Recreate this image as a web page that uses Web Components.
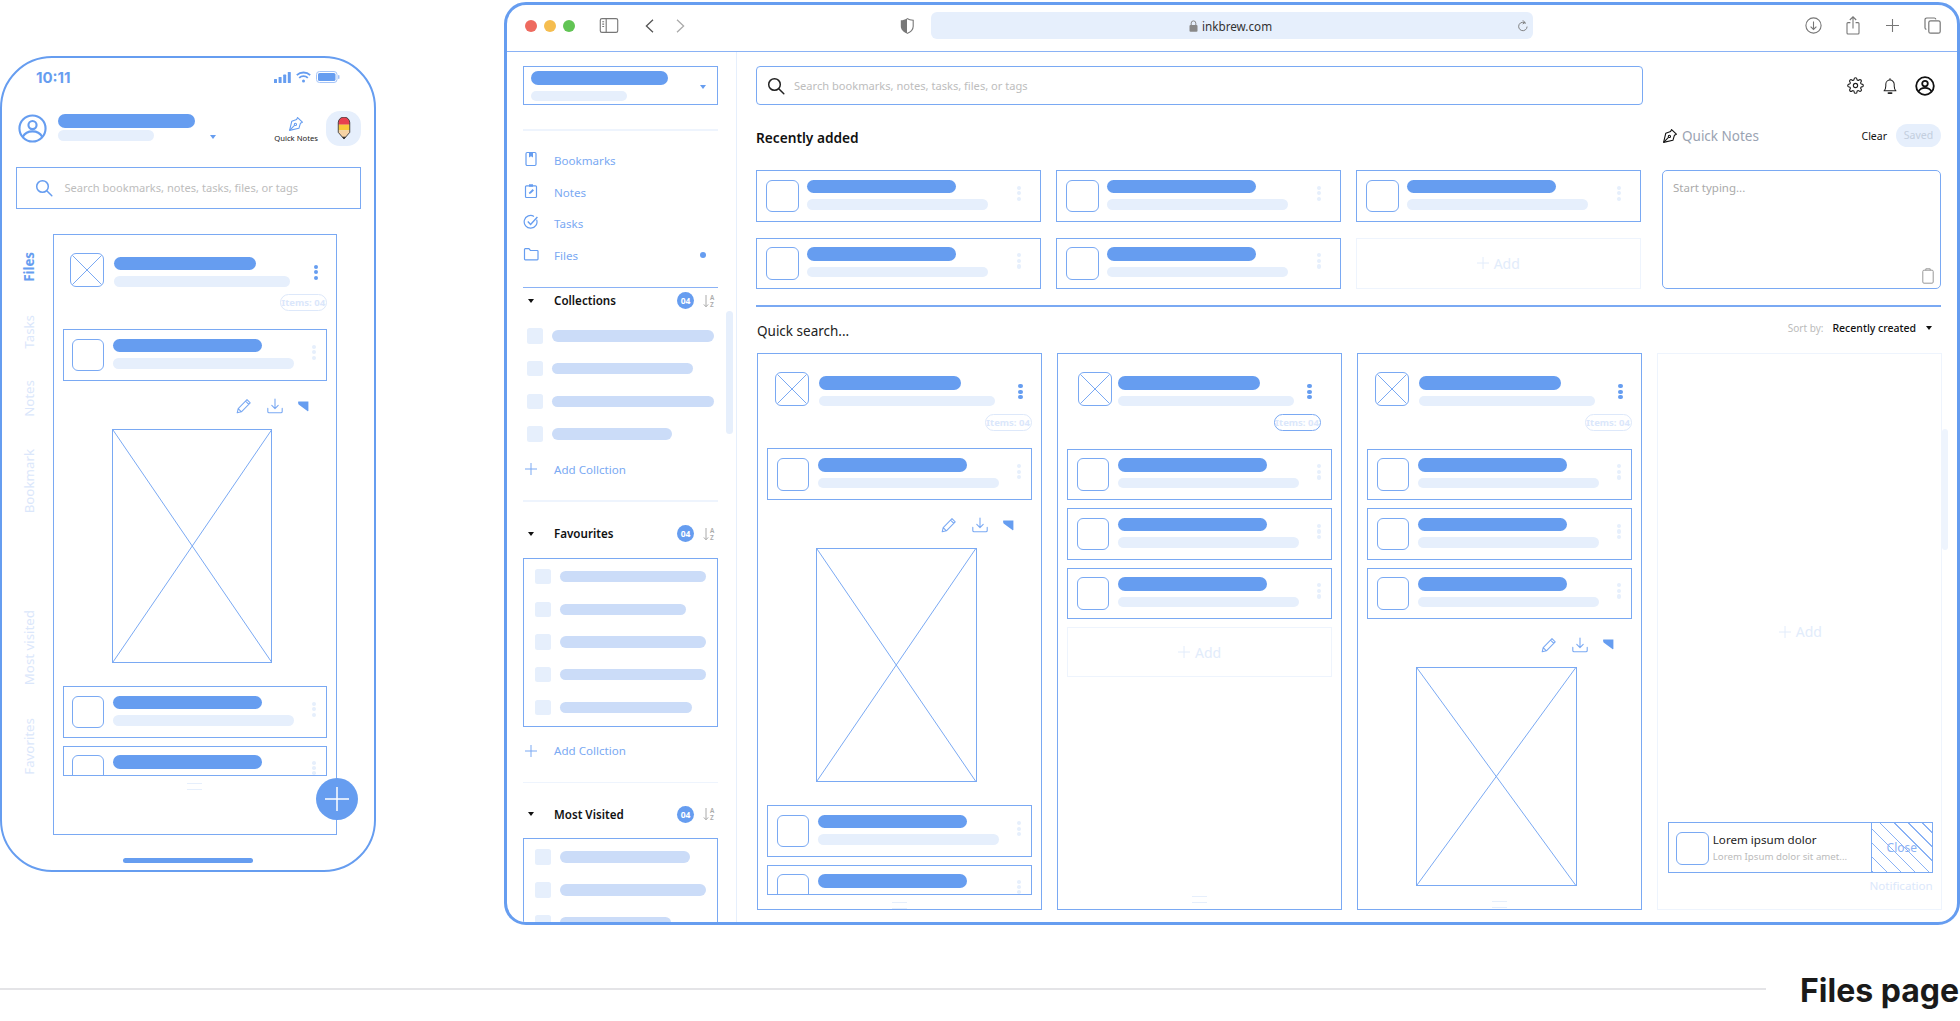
<!DOCTYPE html>
<html>
<head>
<meta charset="utf-8">
<title>Files page</title>
<style>
html,body{margin:0;padding:0;background:#fff}
body{width:1960px;height:1021px;overflow:hidden;font-family:"Noto Sans",sans-serif;--blue:#669df0;--pale:#e6effc;--line:#7aa9f3;--faint:#dbe7fb}
</style>
</head>
<body>
<page-board>
  <phone-frame slot="phone">
    <file-column style="height:601px">
      <file-head></file-head>
      <wire-card class="first"></wire-card>
      <wire-actions></wire-actions>
      <wire-image style="--h:234px"></wire-image>
      <wire-card style="margin-top:23px"></wire-card>
      <wire-card clip></wire-card>
      <wire-grip style="margin-top:7px"></wire-grip>
    </file-column>
  </phone-frame>

  <browser-frame slot="browser">
    <side-bar slot="side">
      <account-box></account-box>
      <side-rule style="margin-top:24px"></side-rule>
      <div style="margin-top:14px">
        <nav-item label="Bookmarks"><svg viewBox="0 0 16 16" fill="none" stroke="#669df0" stroke-width="1.2"><rect x="3" y="1.5" width="10" height="13" rx="1.2"/><path d="M6 1.5h4v5L8 5.2 6 6.5z" fill="#669df0" stroke="none"/></svg></nav-item>
        <nav-item label="Notes"><svg viewBox="0 0 16 16" fill="none" stroke="#669df0" stroke-width="1.2"><rect x="2.5" y="2.8" width="11" height="11.7" rx="1"/><path d="M6 1.2h4v2.6H6z" fill="#669df0" stroke="none"/><path d="M6 11l.4-1.8L9.6 6l1.4 1.4-3.2 3.2z" fill="#669df0" stroke="none"/></svg></nav-item>
        <nav-item label="Tasks"><svg viewBox="0 0 16 16" fill="none" stroke="#669df0" stroke-width="1.2"><path d="M13.6 5.6A6.4 6.4 0 1 1 11 2.4"/><path d="M4.8 7.4L7.6 10.4 14.4 3" stroke-width="1.4"/></svg></nav-item>
        <nav-item label="Files" dot><svg viewBox="0 0 16 16" fill="none" stroke="#669df0" stroke-width="1.2"><path d="M1.5 13V3.5a.8.8 0 0 1 .8-.8h3.6l1.5 1.8h6.8a.8.8 0 0 1 .8.8V13a.8.8 0 0 1-.8.8H2.3a.8.8 0 0 1-.8-.8z"/></svg></nav-item>
      </div>
      <side-head top style="margin-top:16px">Collections</side-head>
      <div style="margin-top:15px;padding-left:4px">
        <side-row style="--w:161.5px"></side-row>
        <side-row style="--w:140.5px"></side-row>
        <side-row style="--w:161.5px"></side-row>
        <side-row style="--w:119.5px"></side-row>
      </div>
      <side-add style="margin-top:19.2px"></side-add>
      <side-rule style="margin-top:23px"></side-rule>
      <side-head style="margin-top:19px">Favourites</side-head>
      <side-box style="margin-top:11px;height:169.5px">
        <side-row style="--w:146px"></side-row>
        <side-row style="--w:126px"></side-row>
        <side-row style="--w:146px"></side-row>
        <side-row style="--w:146px"></side-row>
        <side-row style="--w:132px"></side-row>
      </side-box>
      <side-add style="margin-top:15.5px"></side-add>
      <side-rule style="margin-top:23px"></side-rule>
      <side-head style="margin-top:18px">Most Visited</side-head>
      <side-box style="margin-top:11px;height:120px">
        <side-row style="--w:130px"></side-row>
        <side-row style="--w:146px"></side-row>
        <side-row style="--w:111px"></side-row>
      </side-box>
    </side-bar>

    <main-area slot="main">
      <top-row></top-row>
      <recent-section></recent-section>
      <div class="rule"></div>
      <search-head></search-head>
      <column-grid>
        <file-column>
          <file-head></file-head>
          <wire-card class="first"></wire-card>
          <wire-actions></wire-actions>
          <wire-image style="--h:234px"></wire-image>
          <wire-card style="margin-top:23px"></wire-card>
          <wire-card clip></wire-card>
          <wire-grip style="margin-top:7px"></wire-grip>
        </file-column>
        <file-column>
          <file-head inset></file-head>
          <wire-card class="first"></wire-card>
          <wire-card></wire-card>
          <wire-card></wire-card>
          <add-card style="margin-top:8px;height:50px"></add-card>
          <wire-grip style="margin-top:auto;margin-bottom:6px"></wire-grip>
        </file-column>
        <file-column>
          <file-head></file-head>
          <wire-card class="first"></wire-card>
          <wire-card></wire-card>
          <wire-card></wire-card>
          <wire-actions></wire-actions>
          <wire-image style="--h:219px;margin-top:14px"></wire-image>
          <wire-grip style="margin-top:auto;margin-bottom:1px"></wire-grip>
        </file-column>
        <notice-column></notice-column>
      </column-grid>
    </main-area>
  </browser-frame>

  <page-footer slot="footer">Files page</page-footer>
</page-board>

<script>
// small helper: every element is a template cloned into an open shadow root
function define(name, markup) {
  const tpl = document.createElement("template");
  tpl.innerHTML = markup;
  customElements.define(name, class extends HTMLElement {
    constructor() {
      super();
      this.attachShadow({ mode: "open" }).appendChild(tpl.content.cloneNode(true));
      const label = this.shadowRoot.querySelector("[data-label]");
      if (label) label.textContent = this.getAttribute("label");
    }
  });
}

const searchIcon = c => `<svg viewBox="0 0 18 18" width="18" height="18" fill="none" stroke="${c}" stroke-width="1.5" stroke-linecap="round"><circle cx="7.5" cy="7.5" r="5.8"/><path d="M12 12l4.8 4.8"/></svg>`;
const nibIcon = c => `<svg viewBox="0 0 16 16" width="16" height="16" fill="none" stroke="${c}" stroke-width="1.1" stroke-linejoin="round"><path d="M9.6 1.6l4.8 4.6-2 1.1-1.5 5L1.6 14.4l2.2-9.2 4.8-1.7z"/><path d="M1.8 14.2l4.7-4.8"/><circle cx="7.4" cy="8.4" r="1.1"/></svg>`;

define("wire-thumb", `<style>
:host{display:block;flex:none;box-sizing:border-box;width:var(--s,32.5px);height:var(--s,32.5px);border:1px solid var(--line);border-radius:6px;overflow:hidden}
svg{display:none;width:100%;height:100%}
:host([cross]) svg{display:block}
</style><svg viewBox="0 0 32 32" fill="none" stroke="#7aa9f3" stroke-width="1"><path d="M0 0L32 32M32 0L0 32"/></svg>`);

define("wire-lines", `<style>
:host{display:block;flex:none}
i{display:block;border-radius:7px}
.a{width:var(--a,142px);height:13.5px;background:var(--blue)}
.b{width:var(--b,176px);height:10.5px;background:var(--pale);margin-top:var(--g,6px)}
</style><i class="a"></i><i class="b"></i>`);

define("wire-kebab", `<style>
:host{display:flex;flex-direction:column;gap:1.4px;flex:none}
i{display:block;width:4.2px;height:4.2px;border-radius:50%;background:var(--dot,var(--pale))}
</style><i></i><i></i><i></i>`);

define("wire-card", `<style>
:host{display:flex;box-sizing:border-box;height:var(--ch,51.5px);padding:8.7px 0 0 8.2px;border:1px solid var(--line);margin-top:8px;overflow:hidden}
:host(.first){margin-top:17.5px}
:host([clip]){height:30.5px}
wire-thumb{margin-right:var(--tg,8.4px)}
wire-lines{--a:149.5px;--b:181px}
wire-kebab{margin:6px var(--kr,9.5px) 0 auto}
</style><wire-thumb></wire-thumb><wire-lines></wire-lines><wire-kebab></wire-kebab>`);

define("file-head", `<style>
:host{display:block;margin-top:18px;height:59px;position:relative}
.top{display:flex;padding-left:7.5px}
wire-thumb{--s:34px}
wire-lines{margin:4px 0 0 10px}
wire-kebab{--dot:var(--blue);margin:12px 9px 0 auto}
.pill{box-sizing:border-box;width:47px;height:17px;margin:7.5px 0 0 auto;border:1px solid #dde8fa;border-radius:9px;color:var(--faint);font:700 9.5px/15px "Noto Sans",sans-serif;text-align:center;white-space:nowrap}
:host([inset]) .top{padding-left:10.7px}
:host([inset]) wire-lines{margin-left:6px}
:host([inset]) wire-kebab{margin-right:20px}
:host([inset]) .pill{margin-right:11px;border-color:var(--line)}
</style><div class="top"><wire-thumb cross></wire-thumb><wire-lines></wire-lines><wire-kebab></wire-kebab></div><div class="pill">Items: 04</div>`);

define("wire-actions", `<style>
:host{display:flex;justify-content:flex-end;align-items:center;margin-top:17.5px;height:16px;padding-right:18px}
svg{display:block;flex:none}
svg+svg{margin-left:15px}
</style>
<svg viewBox="0 0 16 16" width="16" height="16" fill="none" stroke="#7aa9f3" stroke-width="1.1" stroke-linejoin="round"><path d="M1.2 14.8l1-4.2 8.8-8.9 3.2 3.2-8.8 8.9zM2.2 10.6l3.2 3.2M9.6 3.2l3.2 3.2"/></svg>
<svg viewBox="0 0 16 16" width="16" height="16" fill="none" stroke="#7aa9f3" stroke-width="1.1" stroke-linecap="round" stroke-linejoin="round"><path d="M8 1v9.4M4.8 7.4L8 10.6l3.2-3.2M.8 10.4v3.1c0 .8.6 1.3 1.3 1.3h11.8c.7 0 1.3-.5 1.3-1.3v-3.1"/></svg>
<svg viewBox="0 0 11 11" width="11" height="11"><path d="M.4.6h10v9.2c0 .4-.6.7-1 .3L.6 3.4C0 2.8 0 .6.4.6z" fill="#669df0"/></svg>`);

define("wire-image", `<style>
:host{display:block;box-sizing:border-box;flex:none;width:160.5px;height:var(--h);margin:15px 0 0 49px;border:1px solid var(--line)}
svg{display:block;width:100%;height:100%}
</style><svg viewBox="0 0 100 100" preserveAspectRatio="none" fill="none" stroke="#7aa9f3"><path vector-effect="non-scaling-stroke" stroke-width="1" d="M0 0L100 100M100 0L0 100"/></svg>`);

define("wire-grip", `<style>
:host{display:block;width:15px;height:4.5px;flex:none;align-self:center;border-top:1.5px solid var(--pale);border-bottom:1.5px solid var(--pale)}
</style>`);

define("add-card", `<style>
:host{display:flex;box-sizing:border-box;align-items:center;justify-content:center;gap:5px;flex:none;border:1.6px solid #eef4fd;color:#e2ecfb;font-size:14px}
svg{display:block}
</style><svg viewBox="0 0 12 12" width="12" height="12" stroke="#e2ecfb" fill="none"><path d="M6 0v12M0 6h12"/></svg><span>Add</span>`);

define("file-column", `<style>
:host{display:flex;flex-direction:column;box-sizing:border-box;border:1px solid var(--line);padding:0 9.2px;min-width:0;overflow:hidden}
</style><slot></slot>`);

define("account-box", `<style>
:host{display:flex;box-sizing:border-box;height:39px;padding:4px 0 0 7px;border:1.5px solid var(--line);margin-top:14px}
wire-lines{--a:137px;--b:96px}
.caret{width:0;height:0;margin:14px 11px 0 auto;border:solid transparent;border-width:4px 3.5px 0;border-top-color:var(--blue)}
</style><wire-lines></wire-lines><span class="caret"></span>`);

define("side-rule", `<style>:host{display:block;height:1.5px;background:#eef4fd}</style>`);

define("nav-item", `<style>
:host{display:flex;align-items:center;height:31.7px;color:#7aa9f3;font-size:11.6px}
::slotted(svg){width:16px;height:16px;flex:none}
.ic{width:16px;margin-right:15px;flex:none;display:block}
.dot{display:none;width:6px;height:6px;border-radius:50%;background:var(--blue);margin:0 12px 0 auto}
:host([dot]) .dot{display:block}
</style><span class="ic"><slot></slot></span><span data-label></span><i class="dot"></i>`);

define("side-head", `<style>
:host{display:flex;align-items:center;box-sizing:border-box;height:26px;font-size:11.6px;font-weight:600;color:#111}
:host([top]){border-top:1.5px solid #8ab2f5}
.chev{width:0;height:0;margin:0 20px 0 5px;border:solid transparent;border-width:4px 3.5px 0;border-top-color:#111}
.badge{width:17px;height:17px;margin-left:auto;border-radius:50%;background:var(--blue);color:#fff;font:700 8.5px/17px "Noto Sans",sans-serif;text-align:center}
svg{display:block;margin:0 3px 0 9px}
</style><i class="chev"></i><slot></slot><span class="badge">04</span>
<svg viewBox="0 0 12 14" width="12" height="14" fill="none" stroke="#aaa" stroke-width="1"><path d="M3 1v11.6M.8 10.4L3 12.8l2.2-2.4"/><text x="7" y="6" font-size="6.4" font-family="Noto Sans" fill="#aaa" stroke="none">A</text><text x="7" y="13" font-size="6.4" font-family="Noto Sans" fill="#aaa" stroke="none">Z</text></svg>`);

define("side-row", `<style>
:host{display:flex;align-items:center;height:15.5px;margin-bottom:17.2px}
b{display:block;width:15.5px;height:15.5px;border-radius:2.5px;background:var(--pale);flex:none;margin-right:9.5px}
i{display:block;width:var(--w);height:11.5px;border-radius:6px;background:#cbdcf8}
</style><b></b><i></i>`);

define("side-add", `<style>
:host{display:flex;align-items:center;height:16px;color:#7aa9f3;font-size:11.6px}
svg{display:block;margin:0 17px 0 2px;flex:none}
</style><svg viewBox="0 0 12 12" width="12" height="12" stroke="#7aa9f3" fill="none"><path d="M6 0v12M0 6h12"/></svg><span>Add Collction</span>`);

define("side-box", `<style>
:host{display:block;box-sizing:border-box;padding:10.4px 0 0 11px;border:1px solid var(--line);overflow:hidden}
</style><slot></slot>`);

define("side-bar", `<style>
:host{display:block;position:relative;box-sizing:border-box;width:230px;flex:none;height:100%;padding:0 18px 0 16px;border-right:1px solid #e6effc;overflow:hidden}
.track{position:absolute;left:218.5px;top:259px;width:7.5px;height:123px;border-radius:4px;background:var(--pale)}
</style><slot></slot><i class="track"></i>`);

define("search-field", `<style>
:host{display:flex;align-items:center;box-sizing:border-box;height:var(--fh,39px);padding-left:var(--pl,10px);border:1.5px solid var(--line);border-radius:var(--r,4px);color:#bdbdbd;font-size:11.1px;gap:var(--gp,9px);white-space:nowrap}
</style><slot></slot><span>Search bookmarks, notes, tasks, files, or tags</span>`);

define("top-row", `<style>
:host{display:flex;align-items:center;margin-top:14px}
search-field{width:887px;flex:none}
.ic{display:flex;align-items:center;margin:0 6.5px 0 auto}
svg{display:block}
.gear{margin-right:18.5px}.bell{margin-right:18px}
</style>
<search-field>${searchIcon("#222")}</search-field>
<div class="ic">
<svg class="gear" viewBox="0 0 24 24" width="17" height="17" fill="none" stroke="#222" stroke-width="1.6" stroke-linecap="round" stroke-linejoin="round"><circle cx="12" cy="12" r="3"/><path d="M19.4 15a1.65 1.65 0 0 0 .33 1.82l.06.06a2 2 0 0 1 0 2.83 2 2 0 0 1-2.83 0l-.06-.06a1.65 1.65 0 0 0-1.82-.33 1.65 1.65 0 0 0-1 1.51V21a2 2 0 0 1-2 2 2 2 0 0 1-2-2v-.09A1.65 1.65 0 0 0 9 19.4a1.65 1.65 0 0 0-1.82.33l-.06.06a2 2 0 0 1-2.83 0 2 2 0 0 1 0-2.83l.06-.06a1.65 1.65 0 0 0 .33-1.82 1.65 1.65 0 0 0-1.51-1H3a2 2 0 0 1-2-2 2 2 0 0 1 2-2h.09A1.65 1.65 0 0 0 4.6 9a1.65 1.65 0 0 0-.33-1.82l-.06-.06a2 2 0 0 1 0-2.83 2 2 0 0 1 2.83 0l.06.06a1.65 1.65 0 0 0 1.82.33H9a1.65 1.65 0 0 0 1-1.51V3a2 2 0 0 1 2-2 2 2 0 0 1 2 2v.09a1.65 1.65 0 0 0 1 1.51 1.65 1.65 0 0 0 1.82-.33l.06-.06a2 2 0 0 1 2.83 0 2 2 0 0 1 0 2.83l-.06.06a1.65 1.65 0 0 0-.33 1.82V9a1.65 1.65 0 0 0 1.51 1H21a2 2 0 0 1 2 2 2 2 0 0 1-2 2h-.09a1.65 1.65 0 0 0-1.51 1z"/></svg>
<svg class="bell" viewBox="0 0 16 20" width="14" height="18" fill="none" stroke="#222" stroke-width="1.2" stroke-linejoin="round"><path d="M1.2 15.5c1.6-1.4 2-3.2 2-5.4V8a4.8 4.8 0 0 1 9.6 0v2.1c0 2.2.4 4 2 5.4z"/><path d="M6.2 18h3.6" stroke-width="2" stroke-linecap="round"/><path d="M8 1v2"/></svg>
<svg viewBox="0 0 20 20" width="20" height="20" fill="none" stroke="#111" stroke-width="1.8"><circle cx="10" cy="10" r="8.8"/><circle cx="10" cy="7.6" r="2.8"/><path d="M3.4 15.6c1.4-2.6 3.6-3.8 6.6-3.8s5.2 1.2 6.6 3.8"/></svg>
</div>`);

define("recent-section", `<style>
:host{display:grid;grid-template-columns:886px 279px;grid-template-rows:65px 119px;column-gap:20px}
.title{align-self:center;font-size:13.7px;font-weight:600;color:#111;line-height:20px}
.grid{display:grid;grid-template-columns:repeat(3,284.5px);grid-auto-rows:51.5px;gap:16px 15.5px}
wire-card{margin:0;--tg:8px;--kr:18.5px;padding-left:9px}
</style>
<div class="title">Recently added</div><notes-head></notes-head>
<div class="grid"><wire-card></wire-card><wire-card></wire-card><wire-card></wire-card><wire-card></wire-card><wire-card></wire-card><add-card></add-card></div>
<notes-box></notes-box>`);

define("notes-head", `<style>
:host{display:flex;align-items:center;align-self:center;margin-top:-4px;height:23px}
svg{display:block;margin:0 4px 0 0;flex:none}
.t{color:#9aa3b2;font-size:13.5px}
.c{margin-left:auto;color:#111;font-size:10.5px}
.s{margin-left:9px;width:45px;height:23px;border-radius:12px;background:var(--pale);color:#c3cede;font:10.5px/23px "Noto Sans",sans-serif;text-align:center}
</style>${nibIcon("#111")}<span class="t">Quick Notes</span><span class="c">Clear</span><span class="s">Saved</span>`);

define("notes-box", `<style>
:host{display:block;position:relative;box-sizing:border-box;border:1.5px solid var(--line);border-radius:5px;padding:9px 10px;color:#aaa;font-size:11.5px;line-height:16px}
svg{position:absolute;right:6px;bottom:4px}
</style>Start typing...<svg viewBox="0 0 12 16" width="12" height="16" fill="none" stroke="#999" stroke-width="1"><rect x=".8" y="2.2" width="10.4" height="13" rx="1.2"/><path d="M3.8 2.4V.8h4.4v1.6"/></svg>`);

define("search-head", `<style>
:host{display:flex;align-items:center;height:20px;margin-top:14px;padding-left:1px;font-size:13.5px;color:#222}
.l{margin:-5px 0 0 auto;color:#bbb;font-size:10px}
.v{margin:-5px 0 0 9px;color:#111;font-size:10.5px;font-weight:500}
i{width:0;height:0;margin:-5px 9px 0 10px;border:solid transparent;border-width:4px 3px 0;border-top-color:#111}
</style><span>Quick search...</span><span class="l">Sort by:</span><span class="v">Recently created</span><i></i>`);

define("column-grid", `<style>
:host{display:grid;grid-template-columns:repeat(4,284.5px);column-gap:15.5px;height:556.5px;margin:12.6px 0 0 1.3px}
</style><slot></slot>`);

define("notice-column", `<style>
:host{display:flex;flex-direction:column;box-sizing:border-box;border:1.5px solid #eef4fd;padding:0 8px 0 9.5px}
.grow{flex:1;display:flex;align-items:center;justify-content:center;padding-top:88px;gap:5px;color:#e2ecfb;font-size:14px}
.note{display:flex;box-sizing:border-box;height:51.5px;border:1px solid var(--line)}
wire-thumb{margin:9.5px 4px 0 7.5px}
.tx{padding-top:8.5px;flex:1;white-space:nowrap}
.tx b{display:block;font:400 11.6px/17px "Noto Sans",sans-serif;color:#222}
.tx span{display:block;font-size:9.7px;line-height:18px;color:#bbb}
.close{display:flex;align-items:center;justify-content:center;width:60px;flex:none;border-left:1px solid var(--line);color:#8ab2f5;font-size:12px;background:repeating-linear-gradient(45deg,#8ab2f5 0 1px,transparent 1px 10px)}
.cap{text-align:right;color:var(--faint);font-size:11.6px;line-height:16px;margin:5px 0 14.5px}
</style>
<div class="grow"><svg viewBox="0 0 12 12" width="12" height="12" stroke="#e2ecfb" fill="none"><path d="M6 0v12M0 6h12"/></svg><span>Add</span></div>
<div class="note"><wire-thumb></wire-thumb><div class="tx"><b>Lorem ipsum dolor</b><span>Lorem Ipsum dolor sit amet...</span></div><div class="close">Close</div></div>
<div class="cap">Notification</div>`);

define("main-area", `<style>
:host{display:block;position:relative;flex:1;min-width:0;padding:0 16px 0 19px}
::slotted(.rule){height:1.5px;background:#7aa9f3;margin-top:16px}
.track{position:absolute;left:1205px;top:377px;width:5.5px;height:121px;border-radius:3px;background:#eef4fd}
</style><slot></slot><i class="track"></i>`);

define("browser-bar", `<style>
:host{display:flex;align-items:center;box-sizing:border-box;height:47px;border-bottom:1.5px solid #8ab2f5;padding:0 0 5px 18px;flex:none}
.tl{display:block;width:12px;height:12px;border-radius:50%;margin-right:7px;flex:none}
svg{display:block;flex:none}
.url{display:flex;align-items:center;box-sizing:border-box;width:602px;height:27px;margin-left:17px;border-radius:6px;background:var(--pale);padding:0 5px 0 258px;color:#333;font-size:11.7px}
.url span{margin-left:4px}
.url svg:last-child{margin-left:auto}
</style>
<i class="tl" style="background:#ee6a5f"></i><i class="tl" style="background:#f5bd4f"></i><i class="tl" style="background:#61c454"></i>
<svg style="margin-left:17px" viewBox="0 0 20 16" width="20" height="15" fill="none" stroke="#777" stroke-width="1.2"><rect x=".7" y=".7" width="18.6" height="14.6" rx="1.8"/><path d="M7 .7v14.6M2.8 4h2M2.8 6.5h2M2.8 9h2"/></svg>
<svg style="margin-left:26px" viewBox="0 0 9 14" width="9" height="14" fill="none" stroke="#555" stroke-width="1.3"><path d="M8 .8L1.4 7 8 13.2"/></svg>
<svg style="margin-left:22px" viewBox="0 0 9 14" width="9" height="14" fill="none" stroke="#aaa" stroke-width="1.3"><path d="M1 .8L7.6 7 1 13.2"/></svg>
<svg style="margin-left:215px" viewBox="0 0 14 16" width="14" height="16"><path d="M7 .5C5 1.8 3 2.2.8 2.3v6c0 3.4 2.6 5.8 6.2 7.2z" fill="#777"/><path d="M7 .5c2 1.3 4 1.700 6.2 1.800v6c0 3.4-2.6 5.8-6.2 7.2" fill="none" stroke="#777" stroke-width="1.1"/></svg>
<div class="url">
<svg viewBox="0 0 9 12" width="9" height="12"><rect x=".5" y="5" width="8" height="6.8" rx="1" fill="#888"/><path d="M2.2 5V3.2a2.3 2.3 0 0 1 4.6 0V5" fill="none" stroke="#888" stroke-width="1"/></svg>
<span>inkbrew.com</span>
<svg viewBox="0 0 12 14" width="11" height="14" fill="none" stroke="#777" stroke-width="1"><path d="M9.6 4.2A4.6 4.6 0 1 0 11 7.6"/><path d="M6.4 .8l2.4 2.4-2.6 1.6" stroke-linejoin="round"/></svg>
</div>
<svg style="margin-left:272px" viewBox="0 0 17 17" width="17" height="17" fill="none" stroke="#777" stroke-width="1.1"><circle cx="8.5" cy="8.5" r="7.6"/><path d="M8.5 4.4v8M5.6 9.6l2.9 2.9 2.9-2.9"/></svg>
<svg style="margin-left:24px" viewBox="0 0 14 19" width="14" height="19" fill="none" stroke="#777" stroke-width="1.1"><path d="M4.4 6.6H2a1 1 0 0 0-1 1V17a1 1 0 0 0 1 1h10a1 1 0 0 0 1-1V7.6a1 1 0 0 0-1-1H9.6"/><path d="M7 12.4V1M3.8 4L7 .8 10.2 4"/></svg>
<svg style="margin-left:26px" viewBox="0 0 13 13" width="13" height="13" fill="none" stroke="#777" stroke-width="1.1"><path d="M6.5 0v13M0 6.5h13"/></svg>
<svg style="margin-left:25px" viewBox="0 0 17 17" width="17" height="17" fill="none" stroke="#777" stroke-width="1.2"><path d="M2.4 12.4A1.7 1.7 0 0 1 1 10.7V2.7A1.7 1.7 0 0 1 2.7 1h7.6a1.7 1.7 0 0 1 1.6 1.3"/><rect x="4.8" y="3.8" width="11.4" height="12.4" rx="1.8"/></svg>`);

define("browser-frame", `<style>
:host{display:flex;flex-direction:column;box-sizing:border-box;flex:none;width:1456px;height:923px;margin:2px 0 0 128px;border:3px solid var(--blue);border-radius:22px;overflow:hidden;background:#fff}
.body{display:flex;flex:1;min-height:0}
</style><browser-bar></browser-bar><div class="body"><slot name="side"></slot><slot name="main"></slot></div>`);

define("phone-tab", `<style>
:host{display:block;writing-mode:vertical-rl;transform:rotate(180deg);font-size:13.3px;line-height:20px;color:var(--faint);white-space:nowrap}
:host([on]){color:var(--blue);font-weight:700}
</style><slot></slot>`);

define("phone-frame", `<style>
:host{display:block;position:relative;box-sizing:border-box;flex:none;width:376px;height:816px;margin-top:56px;border:2px solid var(--blue);border-radius:52px;overflow:hidden;background:#fff}
.status{display:flex;align-items:center;height:38px;padding:0 34px;color:var(--blue);font:700 15px "Inter",sans-serif}
.status svg{display:block}
.status .sig{margin-left:auto}
.status .wifi,.status .bat{margin-left:5px}
.head{display:flex;align-items:center;margin-top:14.5px;height:35px;padding:0 13px 0 15.5px}
.head wire-lines{--a:137px;--b:96px;--g:2.5px;margin:-1px 0 0 11px}
.caret{width:0;height:0;margin:17px 0 0 15.5px;border:solid transparent;border-width:4px 3.5px 0;border-top-color:var(--blue)}
.qn{margin:3px 0 0 auto;display:flex;flex-direction:column;align-items:center;color:#222;font-size:7.7px;line-height:12px;white-space:nowrap}
.pen{margin-left:8px;width:35px;height:35px;border-radius:14px;background:var(--pale);display:flex;align-items:center;justify-content:center}
search-field{margin:21.5px 13px 0 13.5px;--fh:41.5px;--r:0;--pl:18px;--gp:12px}
.body{display:flex;margin-top:25px}
.tabs{width:50.5px;flex:none;display:flex;flex-direction:column;align-items:center;padding-left:3px;box-sizing:border-box}
.panel{width:284.5px;flex:none}
.home{position:absolute;left:121px;top:800px;width:130px;height:5px;border-radius:3px;background:var(--blue)}
.fab{position:absolute;left:313.5px;top:720px;width:42px;height:42px;border-radius:50%;background:var(--blue);display:flex;align-items:center;justify-content:center}
</style>
<div class="status"><span>10:11</span>
<svg class="sig" viewBox="0 0 17 11" width="17" height="11" fill="#669df0"><rect x="0" y="7" width="3" height="4" rx=".6"/><rect x="4.6" y="5" width="3" height="6" rx=".6"/><rect x="9.2" y="2.6" width="3" height="8.4" rx=".6"/><rect x="13.8" y="0" width="3" height="11" rx=".6"/></svg>
<svg class="wifi" viewBox="0 0 15 12" width="15" height="12" fill="none" stroke="#669df0" stroke-width="1.8"><path d="M.8 4.2C4.5.6 10.5.6 14.2 4.2M3.2 6.8c2.4-2.3 6.2-2.3 8.6 0"/><circle cx="7.5" cy="10" r="1.5" fill="#669df0" stroke="none"/></svg>
<svg class="bat" viewBox="0 0 24 12" width="24" height="12"><rect x=".5" y=".5" width="20.5" height="11" rx="3" fill="none" stroke="#a5c4f7"/><rect x="2" y="2" width="17.5" height="8" rx="1.6" fill="#669df0"/><rect x="22" y="4" width="1.5" height="4" rx=".7" fill="#a5c4f7"/></svg>
</div>
<div class="head">
<svg viewBox="0 0 30 30" width="29" height="29" fill="none" stroke="#669df0" stroke-width="2.2" style="display:block;flex:none"><circle cx="15" cy="15" r="13.5"/><circle cx="15" cy="11.5" r="4.2"/><path d="M5 23.5c2-3.6 5.5-5.5 10-5.5s8 1.900 10 5.500"/></svg>
<wire-lines></wire-lines><i class="caret"></i>
<div class="qn">${nibIcon("#669df0")}<span>Quick Notes</span></div>
<div class="pen"><svg viewBox="0 0 14 24" width="14" height="23"><path d="M1 8V6a6 6 0 0 1 12 0v2z" fill="#e8404f"/><rect x="1" y="8" width="12" height="6" fill="#f9c83a"/><path d="M1 14h12v2l-6 7-6-7z" fill="#f6d3a5"/><path d="M5 20.7h4l-2 2.3z" fill="#333"/><path d="M1 16V6a6 6 0 0 1 12 0v10l-6 7z" fill="none" stroke="#333" stroke-width=".9"/></svg></div>
</div>
<search-field>${searchIcon("#669df0")}</search-field>
<div class="body">
<div class="tabs">
<phone-tab on style="margin-top:18px">Files</phone-tab>
<phone-tab style="margin-top:34px">Tasks</phone-tab>
<phone-tab style="margin-top:31px">Notes</phone-tab>
<phone-tab style="margin-top:32px">Bookmark</phone-tab>
<phone-tab style="margin-top:97px">Most visited</phone-tab>
<phone-tab style="margin-top:33px">Favorites</phone-tab>
</div>
<div class="panel"><slot></slot></div>
</div>
<div class="fab"><svg viewBox="0 0 24 24" width="24" height="24" stroke="#fff" stroke-width="1.5"><path d="M12 0v24M0 12h24"/></svg></div>
<i class="home"></i>`);

define("page-footer", `<style>
:host{display:flex;align-items:center;height:48px;margin-top:41px;color:#1a1a1a;font:700 32px "Inter",sans-serif;white-space:nowrap}
i{display:block;width:1766px;height:2px;background:#e4e4e7;margin:-2px 34px 0 0;flex:none}
</style><i></i><slot></slot>`);

define("page-board", `<style>
:host{display:block}
.row{display:flex;height:925px;align-items:flex-start}
</style><div class="row"><slot name="phone"></slot><slot name="browser"></slot></div><slot name="footer"></slot>`);
</script>
</body>
</html>
